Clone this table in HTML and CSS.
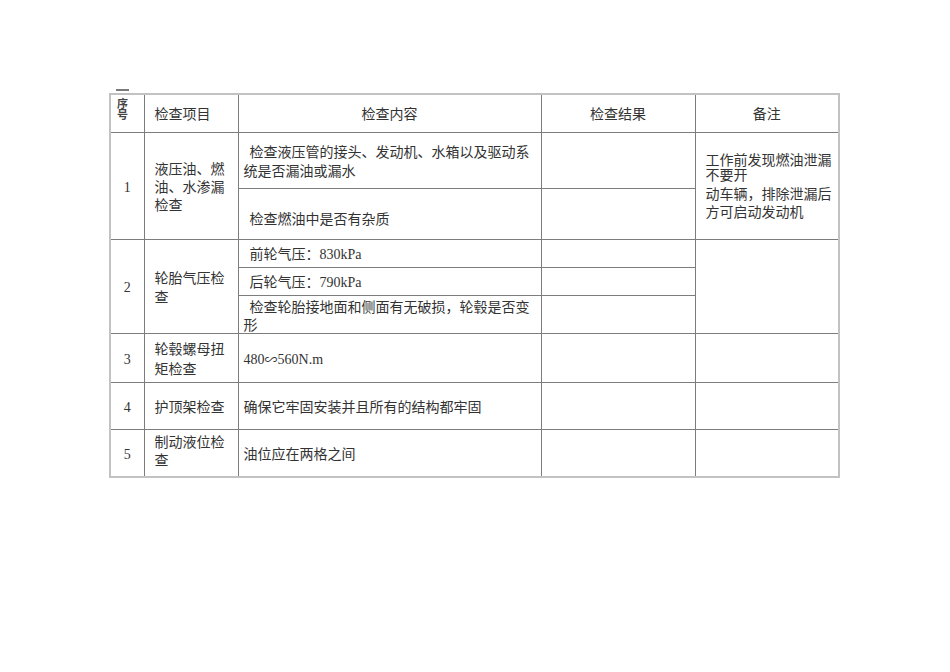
FILE: index.html
```html
<!DOCTYPE html>
<html lang="zh">
<head>
<meta charset="utf-8">
<title>检查表</title>
<link rel="stylesheet" href="styles.css">
</head>
<body>
<div class="page">
  <div class="dash"></div>
  <table class="sheet">
    <colgroup>
      <col class="c-no">
      <col class="c-item">
      <col class="c-content">
      <col class="c-result">
      <col class="c-note">
    </colgroup>
    <thead>
      <tr class="h-head">
        <th class="no-head">序<br>号</th>
        <th class="left pad">检查项目</th>
        <th>检查内容</th>
        <th>检查结果</th>
        <th>备注</th>
      </tr>
    </thead>
    <tbody>
      <tr class="h-1a">
        <td rowspan="2" class="num"><span class="lat">1</span></td>
        <td rowspan="2" class="pad item">液压油、燃油、水渗漏检查</td>
        <td class="content indent">检查液压管的接头、发动机、水箱以及驱动系统是否漏油或漏水</td>
        <td></td>
        <td rowspan="2" class="note">
          <span class="n-tight">工作前发现燃油泄漏</span>
          <span class="n-tight">不要开</span>
          <span class="n-loose">动车辆，排除泄漏后</span>
          <span class="n-loose">方可启动发动机</span>
        </td>
      </tr>
      <tr class="h-1b">
        <td class="content indent lower">检查燃油中是否有杂质</td>
        <td></td>
      </tr>
      <tr class="h-2a">
        <td rowspan="3" class="num"><span class="lat">2</span></td>
        <td rowspan="3" class="pad item">轮胎气压检查</td>
        <td class="content indent">前轮气压：<span class="lat">830kPa</span></td>
        <td></td>
        <td rowspan="3"></td>
      </tr>
      <tr class="h-2b">
        <td class="content indent">后轮气压：<span class="lat">790kPa</span></td>
        <td></td>
      </tr>
      <tr class="h-2c">
        <td class="content indent tight">检查轮胎接地面和侧面有无破损，轮毂是否变形</td>
        <td></td>
      </tr>
      <tr class="h-3">
        <td class="num"><span class="lat">3</span></td>
        <td class="pad item wide">轮毂螺母扭矩检查</td>
        <td class="content"><span class="lat">480</span><span class="wave">∽</span><span class="lat">560N.m</span></td>
        <td></td>
        <td></td>
      </tr>
      <tr class="h-4">
        <td class="num"><span class="lat">4</span></td>
        <td class="pad item">护顶架检查</td>
        <td class="content">确保它牢固安装并且所有的结构都牢固</td>
        <td></td>
        <td></td>
      </tr>
      <tr class="h-5">
        <td class="num"><span class="lat">5</span></td>
        <td class="pad item up">制动液位检查</td>
        <td class="content">油位应在两格之间</td>
        <td></td>
        <td></td>
      </tr>
    </tbody>
  </table>
</div>
</body>
</html>
```

FILE: styles.css
```css
html, body {
  margin: 0;
  padding: 0;
  background: #ffffff;
}

body {
  font-family: "Noto Sans CJK SC", "Liberation Serif", sans-serif;
  font-size: 14px;
  color: #333333;
}

.page {
  padding: 89px 0 0 109px;
}

.dash {
  width: 13px;
  height: 2px;
  margin-left: 7px;
  margin-bottom: 2px;
  background: #7a7a7a;
}

.lat {
  font-family: "Liberation Serif", serif;
  line-height: 1;
}

.wave {
  font-family: "Noto Sans CJK SC", sans-serif;
  font-size: 13px;
}

.sheet {
  border-collapse: collapse;
  table-layout: fixed;
  width: 729px;
  border: 2px solid #c2c2c2;
}

.c-no { width: 34px; }
.c-item { width: 94px; }
.c-content { width: 303px; }
.c-result { width: 154px; }
.c-note { width: 144px; }

.sheet th,
.sheet td {
  border: 1px solid #7d7d7d;
  padding: 0 5px;
  font-weight: normal;
  vertical-align: middle;
  line-height: 19px;
  text-align: left;
}

.sheet th {
  text-align: center;
}

.sheet th.left {
  text-align: left;
}

.sheet th.no-head {
  vertical-align: top;
  text-align: left;
  padding: 3px 0 0 6px;
  font-size: 11px;
  line-height: 10.5px;
  font-weight: bold;
  color: #444;
}

.sheet .pad {
  padding-left: 10px;
  padding-right: 8px;
}

.sheet .item {
  line-height: 18.3px;
}

.sheet .item.wide {
  line-height: 20px;
}

.sheet .item.up {
  padding-bottom: 6px;
}

.sheet .num {
  text-align: center;
  padding: 0;
}

.sheet .content {
  padding-left: 5px;
  padding-right: 6px;
}

.sheet .indent {
  text-indent: 6px;
}

.sheet .tight {
  line-height: 18px;
}

.sheet .lower {
  padding-top: 8px;
}

.sheet .note {
  padding-left: 10px;
  padding-right: 2px;
}

.n-tight {
  display: block;
  line-height: 15px;
}

.n-loose {
  display: block;
  line-height: 18.3px;
  white-space: nowrap;
}

.n-tight + .n-loose {
  margin-top: 2px;
}

.h-head th { height: 34px; }
.h-1a td { height: 55px; }
.h-1b td { height: 42px; }
.h-2a td { height: 27px; }
.h-2b td { height: 27px; }
.h-2c td { height: 37px; }
.h-3 td { height: 48px; }
.h-4 td { height: 46px; }
.h-5 td { height: 40px; }
```
